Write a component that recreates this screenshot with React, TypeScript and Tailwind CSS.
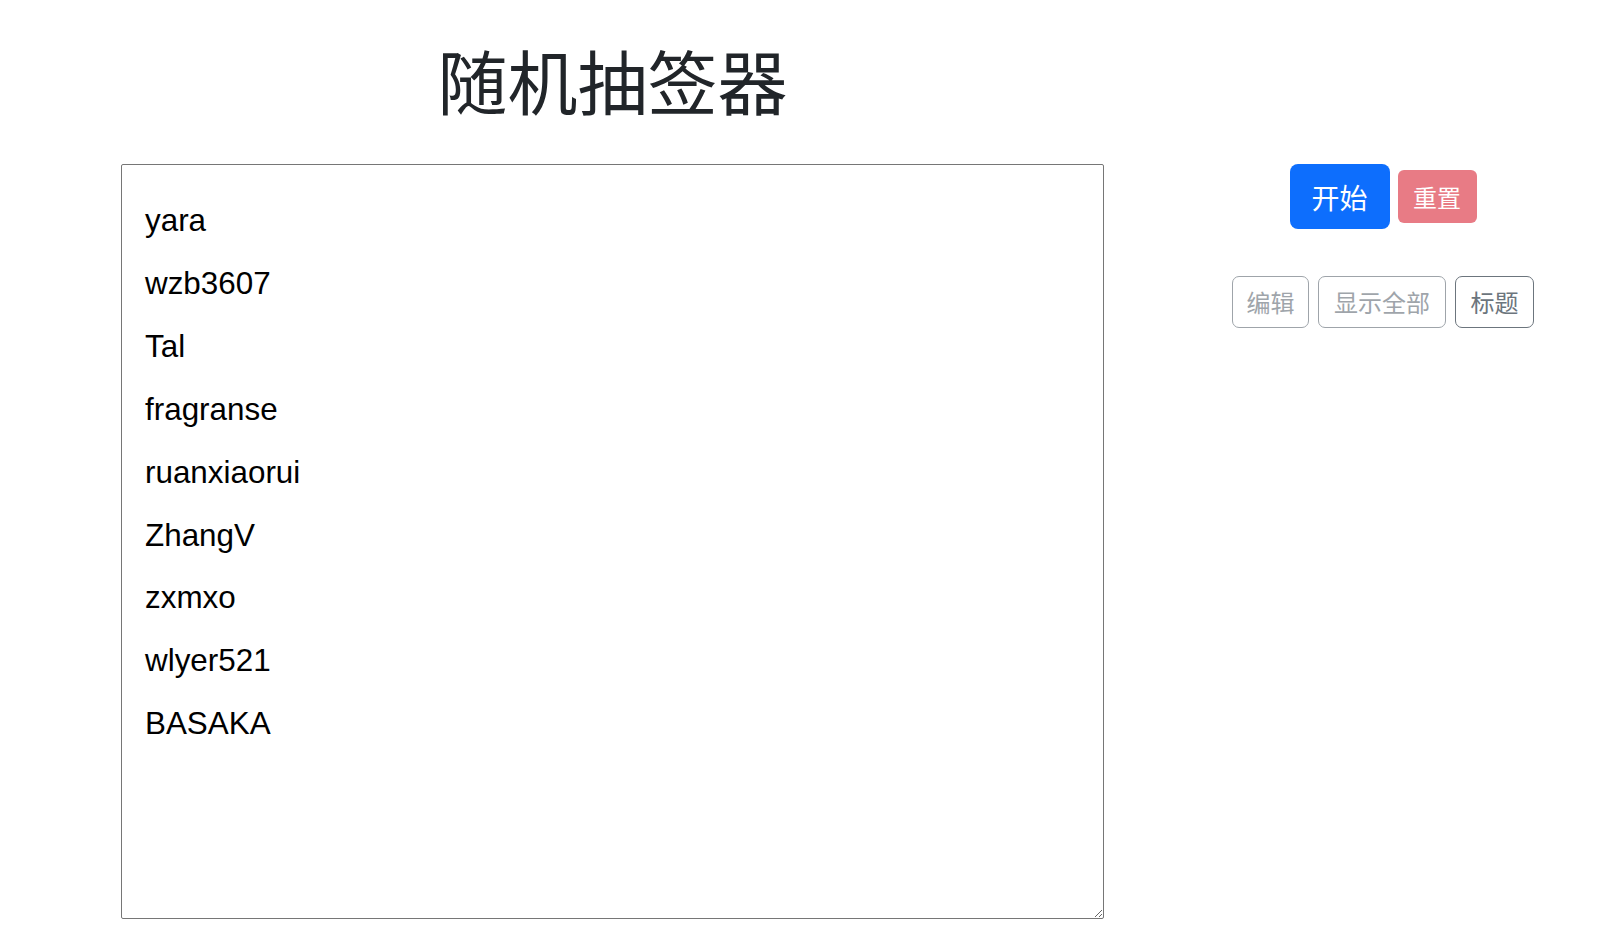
const names = ['yara', 'wzb3607', 'Tal', 'fragranse', 'ruanxiaorui', 'ZhangV', 'zxmxo', 'wlyer521', 'BASAKA'];

const cjk = "font-['Noto_Sans_CJK_SC','Noto_Sans',sans-serif]";

export default function App() {
  return (
    <div className="flex min-h-[938px] bg-white pl-[121px] text-[#212529]">
      <div className="flex w-[983px] flex-col">
        <h1 className={`${cjk} mt-[38px] h-[84px] text-center text-[70px] leading-[84px] font-normal`}>随机抽签器</h1>
        <textarea
          className="mt-[42px] h-[755px] w-full resize rounded-[2px] border border-[#767676] px-[23px] pt-[25px] font-['Liberation_Sans',Arial,sans-serif] text-[31.4px] leading-[62.9px] text-black outline-none"
          defaultValue={names.join('\n')}
          spellCheck={false}
        />
      </div>
      <div className={`${cjk} ml-[44px] flex flex-1 flex-col items-center pt-[164px]`}>
        <div className="flex items-center gap-[8px]">
          <button className="h-[65px] w-[100px] rounded-[8px] bg-[#0d6efd] text-[28px] leading-[42px] text-white">开始</button>
          <button className="h-[53px] w-[79px] rounded-[6px] bg-[#dc3545] text-[24px] leading-[36px] text-white opacity-65">重置</button>
        </div>
        <div className="mt-[47px] flex gap-[9px]">
          <button className="h-[52px] w-[77px] rounded-[7px] border border-[#6c757d] text-[24px] leading-[36px] text-[#6c757d] opacity-65">编辑</button>
          <button className="h-[52px] w-[128px] rounded-[7px] border border-[#6c757d] text-[24px] leading-[36px] text-[#6c757d] opacity-65">显示全部</button>
          <button className="h-[52px] w-[79px] rounded-[7px] border border-[#6c757d] text-[24px] leading-[36px] text-[#6c757d]">标题</button>
        </div>
      </div>
    </div>
  );
}
